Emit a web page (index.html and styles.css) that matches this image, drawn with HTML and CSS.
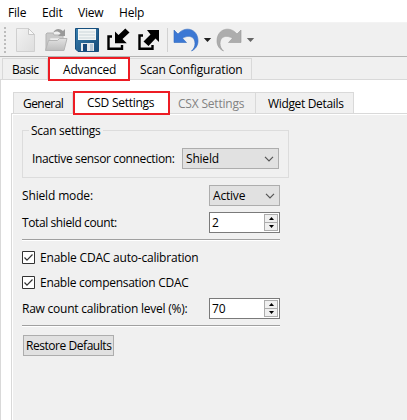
FILE: index.html
```html
<!DOCTYPE html>
<html lang="en">
<head>
<meta charset="utf-8">
<title>Configurator</title>
<link rel="stylesheet" href="styles.css">
</head>
<body>
<nav class="menu"><span class="m-file">File</span><span class="m-edit">Edit</span><span class="m-view">View</span><span class="m-help">Help</span></nav>
<div class="toolbar">
<svg width="407" height="33" viewBox="0 23 407 33">
<defs>
<linearGradient id="page" x1="0" y1="0" x2="1" y2="1"><stop offset="0" stop-color="#f2f2f2"/><stop offset="1" stop-color="#dedede"/></linearGradient>
<linearGradient id="fold" x1="0" y1="0" x2="0" y2="1"><stop offset="0" stop-color="#e2e2e2"/><stop offset="1" stop-color="#bdbdbd"/></linearGradient>
<linearGradient id="disk" x1="0" y1="0" x2="1" y2="1"><stop offset="0" stop-color="#397faf"/><stop offset="1" stop-color="#164b78"/></linearGradient>
</defs>
<path d="M5 27v27" stroke="#bcbcbc" stroke-width="2" stroke-dasharray="2 2"/>
<path d="M16.500 28.500h12l6 6v17h-18z" fill="url(#page)" stroke="#d0d0d0"/>
<path d="M28.500 28.500v6h6z" fill="#f8f8f8" stroke="#c8c8c8"/>
<path d="M46 50V34l1-1h6l1 2h9v15z" fill="#c9c9c9" stroke="#b3b3b3"/>
<path d="M50 38h14v10H50z" fill="#eee" stroke="#ccc" stroke-width=".6"/>
<path d="M45.500 50.500l3-10h9l2-2h7.500l-3 12z" fill="url(#fold)" stroke="#b5b5b5"/>
<path d="M53 33c2-5 7-5 10-2l2-2v7h-7l2.500-2.500C58 31 56 31 53 33z" fill="#999"/>
<path d="M75.500 28.500h23v23H78l-2.500-2.500z" fill="url(#disk)" stroke="#164f7e"/>
<path d="M78 29h18v11H78z" fill="#f1f5f5"/>
<path d="M79 32h16M79 35h16M79 38h16" stroke="#cbd5d9"/>
<path d="M81 43h13v8H81z" fill="#e6eaee"/>
<path d="M83 44h4v7h-4z" fill="#174677"/>
<path d="M90 44h3v7h-3z" fill="#b8c8d6"/>
<path d="M112 36.500h-3.500v12.300H122V45" fill="none" stroke="#000" stroke-width="2.400"/>
<path d="M115 31.500l3.500 3.500 6.800-6.500 4.200 4-7 6.500 4.300 4.300H115z" fill="#000"/>
<path d="M143 35.500h-3.500v13.300H152.500V45" fill="none" stroke="#000" stroke-width="2.400"/>
<path d="M147 30h12v12l-3.500-3.500-7 7.500-5-4.500 7-7z" fill="#000"/>
<path d="M167.500 28v24" stroke="#d2d2d2"/>
<path d="M174 30v12.500h12.500l-4-4.200c6-3.800 12.500-2 12.500 5.200 0 3.500-1.500 5.500-3.500 7.500 4-1.800 6.500-5.500 6.500-10 0-12.500-13-15.500-20-7z" fill="#3c78d4" stroke="#3069c0" stroke-width=".6"/>
<path d="M203.800 38h7.400l-3.700 4z" fill="#222"/>
<path d="M241 30v12.500h-12.500l4-4.200c-6-3.800-12.500-2-12.500 5.200 0 3.500 1.500 5.500 3.500 7.500-4-1.800-6.500-5.500-6.500-10 0-12.500 13-15.500 20-7z" fill="#adadad" stroke="#999" stroke-width=".6"/>
<path d="M246.800 38h7.400l-3.700 4z" fill="#666"/>
</svg>
</div>
<div class="tabs outer"><div class="tab basic"><span>Basic</span></div><div class="tab active adv"><span>Advanced</span></div><div class="tab scan"><span>Scan Configuration</span></div></div>
<main>
<div class="tabs inner"><div class="tab general"><span>General</span></div><div class="tab active csd"><span>CSD Settings</span></div><div class="tab csx"><span>CSX Settings</span></div><div class="tab widget"><span>Widget Details</span></div></div>
<section class="panel">
<div class="group"><span class="legend">Scan settings</span>
<div class="group-row"><span class="t-inactive">Inactive sensor connection:</span><div class="combo wide"><span>Shield</span><svg width="10" height="6"><path d="M1 .8l4 4 4-4" fill="none" stroke="#555" stroke-width="1.200"/></svg></div></div>
</div>
<div class="row mode"><span class="t-mode">Shield mode:</span><div class="combo"><span>Active</span><svg width="10" height="6"><path d="M1 .8l4 4 4-4" fill="none" stroke="#555" stroke-width="1.200"/></svg></div></div>
<div class="row count"><span class="t-total">Total shield count:</span><div class="spin"><span>2</span><div class="steps"><i><svg width="5" height="3"><path d="M0 3h5L2.500 0z"/></svg></i><i><svg width="5" height="3"><path d="M0 0h5L2.500 3z"/></svg></i></div></div></div>
<div class="rule"></div>
<div class="check first"><svg width="13" height="13"><path d="M.5.5h12v12H.5z" fill="#fff" stroke="#333"/><path d="M2.500 6.500l2.500 2.700 5.500-5.700" fill="none" stroke="#333" stroke-width="1.200"/></svg><span>Enable CDAC auto-calibration</span></div>
<div class="check"><svg width="13" height="13"><path d="M.5.5h12v12H.5z" fill="#fff" stroke="#333"/><path d="M2.500 6.500l2.500 2.700 5.500-5.700" fill="none" stroke="#333" stroke-width="1.200"/></svg><span class="t-comp">Enable compensation CDAC</span></div>
<div class="row raw"><span class="t-raw">Raw count calibration level (%):</span><div class="spin"><span>70</span><div class="steps"><i><svg width="5" height="3"><path d="M0 3h5L2.500 0z"/></svg></i><i><svg width="5" height="3"><path d="M0 0h5L2.500 3z"/></svg></i></div></div></div>
<div class="rule last"></div>
<button>Restore Defaults</button>
</section>
</main>
</body>
</html>
```
FILE: styles.css
```css
* { box-sizing: border-box; }
body { margin: 0; width: 407px; height: 420px; overflow: hidden; display: flex; flex-direction: column; background: #fff; color: #000; font: 12px/16px "Open Sans", "Noto Sans", sans-serif; letter-spacing: -0.2px; }
span { white-space: nowrap; }
svg { display: block; flex: none; }
.menu { display: flex; height: 23px; flex: none; padding: 5px 0 0 8px; border-bottom: 1px solid #f3f3f3; }
.m-file { width: 34px; }
.m-edit { width: 36px; }
.m-view { width: 41px; }
.toolbar { height: 34px; flex: none; background: #f0f0f0; border-bottom: 1px solid #b5b5b5; }
.tabs { display: flex; align-items: flex-end; flex: none; }
.outer { height: 23px; padding-left: 2px; background: #f0f0f0; border-bottom: 1px solid #d9d9d9; }
.tab { height: 21px; flex: none; padding-top: 3px; background: #f0f0f0; border: 1px solid #d9d9d9; border-width: 1px 1px 0 0; }
.tab.active { position: relative; z-index: 1; height: 24px; margin-bottom: -2px; border: 2px solid #ed1c24; background: #fff; }
.basic { width: 46px; padding-left: 9px; border-left-width: 1px; letter-spacing: -0.45px; }
.adv { width: 82px; padding: 3px 0 0 13px; }
.scan { width: 122px; padding-left: 10px; }
main { flex: 1; display: flex; flex-direction: column; padding: 10px 0 0 10px; border-left: 1px solid #d9d9d9; }
.inner { height: 23px; padding-left: 2px; }
.general { width: 60px; padding-left: 9px; border-left-width: 1px; letter-spacing: -0.55px; }
.csd { width: 97px; padding: 2px 0 0 12px; letter-spacing: -0.27px; }
.csx { width: 86px; padding-left: 8px; color: #838383; }
.widget { width: 98px; padding-left: 12px; letter-spacing: -0.34px; }
.panel { flex: 1; display: flex; flex-direction: column; align-items: flex-start; padding: 16px 0 0 10px; background: #f0f0f0; border: 1px solid #d9d9d9; border-width: 1px 0 0 1px; box-shadow: inset 1px 1px #fff; }
.group { width: 267px; height: 48px; flex: none; padding: 0 9px; border: 1px solid #dcdcdc; }
.legend { display: block; width: 74px; height: 16px; margin: -8px 0 9px -3px; padding-left: 2px; background: #f0f0f0; letter-spacing: -0.28px; }
.group-row { display: flex; align-items: center; justify-content: space-between; }
.t-inactive { letter-spacing: -0.36px; }
.combo { width: 71px; height: 21px; flex: none; display: flex; align-items: center; justify-content: space-between; padding: 0 4px 0 3px; border: 1px solid #adadad; background: #e1e1e1; }
.combo.wide { width: 97px; }
.row { width: 258px; height: 21px; flex: none; display: flex; align-items: center; justify-content: space-between; }
.mode { margin-top: 7px; }
.t-mode { letter-spacing: -0.15px; }
.count { margin-top: 6px; }
.t-total { letter-spacing: -0.4px; }
.spin { width: 71px; height: 21px; flex: none; display: flex; align-items: center; justify-content: space-between; padding: 0 1px 0 2px; border: 1px solid #7a7a7a; background: #fff; letter-spacing: 0; }
.steps { width: 14px; height: 17px; border: 1px solid #acacac; background: #efefef; }
.steps i { height: 7px; display: flex; align-items: center; justify-content: center; }
.steps i + i { height: 8px; border-top: 1px solid #acacac; }
.rule { width: 258px; height: 2px; flex: none; margin-top: 6px; background: #a0a0a0; border-bottom: 1px solid #fff; }
.check { height: 25px; flex: none; display: flex; align-items: center; gap: 5px; }
.check.first { margin-top: 4px; }
.t-comp { letter-spacing: -0.28px; }
.raw { margin-top: 3px; }
.t-raw { letter-spacing: -0.23px; }
.last { margin-top: 6px; }
button { width: 91px; height: 21px; flex: none; margin: 8px 0 0 1px; padding: 0 0 0 2px; text-align: left; white-space: nowrap; border: 1px solid #adadad; background: #e1e1e1; color: #000; font: inherit; letter-spacing: -0.45px; line-height: 16px; }
```
